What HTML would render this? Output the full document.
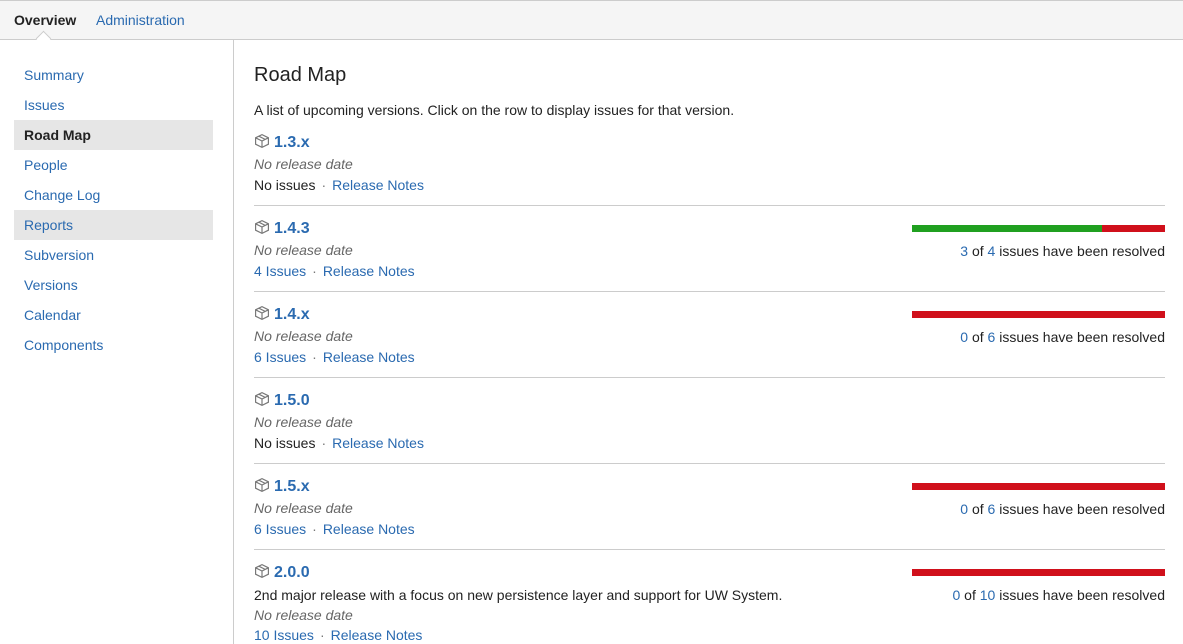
<!DOCTYPE html>
<html><head><style>
body{margin:0;width:1183px;height:644px;overflow:hidden;font-family:"Liberation Sans",Arial,sans-serif;font-size:14px;color:#222;background:#fff;position:relative}
a{color:#2a6ab0;text-decoration:none}
.top{position:absolute;left:0;top:0;width:1183px;height:40px;background:#f5f5f5;border-top:1px solid #ccc;border-bottom:1px solid #ccc;box-sizing:border-box}
.top span{position:absolute;top:11px;font-size:14px}
.ptr{position:absolute;left:38px;top:33px;width:10px;height:10px;background:#fff;border-left:1px solid #ccc;border-top:1px solid #ccc;transform:rotate(45deg)}
.side{position:absolute;left:233px;top:40px;width:1px;height:604px;background:#ccc}
.nav{position:absolute;left:14px;width:199px;height:30px;line-height:30px;padding-left:10px;box-sizing:border-box}
.sel{background:#e6e6e6}
h1{position:absolute;left:254px;top:64px;margin:0;font-size:20px;font-weight:normal;color:#222}
.t{position:absolute;left:254px;white-space:nowrap}
.ver{font-weight:bold;font-size:16px;color:#2a6ab0}
.i{color:#666;font-style:italic}
.hr{position:absolute;left:254px;width:911px;height:1px;background:#ccc}
.bar{position:absolute;left:912px;width:253px;height:7px;background:#d0101b}
.bar i{display:block;height:7px;background:#20a020}
.r{position:absolute;right:18px;white-space:nowrap}
.dot{color:#777;margin:0 6px}
svg{vertical-align:-2px;margin-right:4px}
</style></head><body>
<div class="top"><span style="left:14px;font-weight:bold;color:#222">Overview</span><span style="left:96px;color:#2a6ab0">Administration</span></div>
<div class="ptr"></div>
<div class="side"></div>
<div class="nav" style="top:60px"><a>Summary</a></div>
<div class="nav" style="top:90px"><a>Issues</a></div>
<div class="nav sel" style="top:120px;font-weight:bold">Road Map</div>
<div class="nav" style="top:150px"><a>People</a></div>
<div class="nav" style="top:180px"><a>Change Log</a></div>
<div class="nav sel" style="top:210px"><a>Reports</a></div>
<div class="nav" style="top:240px"><a>Subversion</a></div>
<div class="nav" style="top:270px"><a>Versions</a></div>
<div class="nav" style="top:300px"><a>Calendar</a></div>
<div class="nav" style="top:330px"><a>Components</a></div>
<h1>Road Map</h1>
<div class="t" style="top:102px">A list of upcoming versions. Click on the row to display issues for that version.</div>

<div class="t" style="top:133px"><svg width="16" height="16" viewBox="0 0 15 15" fill="none" stroke="#777" stroke-width="1.1"><path d="M7.5 1.5L13.5 4.5V10.5L7.5 13.5L1.5 10.5V4.5Z M1.5 4.5L7.5 7.5L13.5 4.5 M7.5 7.5V13.5 M4.5 3L10.5 6"/></svg><span class="ver">1.3.x</span></div>
<div class="t i" style="top:156px">No release date</div>
<div class="t" style="top:177px">No issues<span class="dot">·</span><a>Release Notes</a></div>
<div class="hr" style="top:205px"></div>

<div class="t" style="top:219px"><svg width="16" height="16" viewBox="0 0 15 15" fill="none" stroke="#777" stroke-width="1.1"><path d="M7.5 1.5L13.5 4.5V10.5L7.5 13.5L1.5 10.5V4.5Z M1.5 4.5L7.5 7.5L13.5 4.5 M7.5 7.5V13.5 M4.5 3L10.5 6"/></svg><span class="ver">1.4.3</span></div>
<div class="t i" style="top:242px">No release date</div>
<div class="t" style="top:263px"><a>4 Issues</a><span class="dot">·</span><a>Release Notes</a></div>
<div class="bar" style="top:225px"><i style="width:190px"></i></div>
<div class="r" style="top:243px"><a>3</a> of <a>4</a> issues have been resolved</div>
<div class="hr" style="top:291px"></div>

<div class="t" style="top:305px"><svg width="16" height="16" viewBox="0 0 15 15" fill="none" stroke="#777" stroke-width="1.1"><path d="M7.5 1.5L13.5 4.5V10.5L7.5 13.5L1.5 10.5V4.5Z M1.5 4.5L7.5 7.5L13.5 4.5 M7.5 7.5V13.5 M4.5 3L10.5 6"/></svg><span class="ver">1.4.x</span></div>
<div class="t i" style="top:328px">No release date</div>
<div class="t" style="top:349px"><a>6 Issues</a><span class="dot">·</span><a>Release Notes</a></div>
<div class="bar" style="top:311px"></div>
<div class="r" style="top:329px"><a>0</a> of <a>6</a> issues have been resolved</div>
<div class="hr" style="top:377px"></div>

<div class="t" style="top:391px"><svg width="16" height="16" viewBox="0 0 15 15" fill="none" stroke="#777" stroke-width="1.1"><path d="M7.5 1.5L13.5 4.5V10.5L7.5 13.5L1.5 10.5V4.5Z M1.5 4.5L7.5 7.5L13.5 4.5 M7.5 7.5V13.5 M4.5 3L10.5 6"/></svg><span class="ver">1.5.0</span></div>
<div class="t i" style="top:414px">No release date</div>
<div class="t" style="top:435px">No issues<span class="dot">·</span><a>Release Notes</a></div>
<div class="hr" style="top:463px"></div>

<div class="t" style="top:477px"><svg width="16" height="16" viewBox="0 0 15 15" fill="none" stroke="#777" stroke-width="1.1"><path d="M7.5 1.5L13.5 4.5V10.5L7.5 13.5L1.5 10.5V4.5Z M1.5 4.5L7.5 7.5L13.5 4.5 M7.5 7.5V13.5 M4.5 3L10.5 6"/></svg><span class="ver">1.5.x</span></div>
<div class="t i" style="top:500px">No release date</div>
<div class="t" style="top:521px"><a>6 Issues</a><span class="dot">·</span><a>Release Notes</a></div>
<div class="bar" style="top:483px"></div>
<div class="r" style="top:501px"><a>0</a> of <a>6</a> issues have been resolved</div>
<div class="hr" style="top:549px"></div>

<div class="t" style="top:563px"><svg width="16" height="16" viewBox="0 0 15 15" fill="none" stroke="#777" stroke-width="1.1"><path d="M7.5 1.5L13.5 4.5V10.5L7.5 13.5L1.5 10.5V4.5Z M1.5 4.5L7.5 7.5L13.5 4.5 M7.5 7.5V13.5 M4.5 3L10.5 6"/></svg><span class="ver">2.0.0</span></div>
<div class="t" style="top:587px">2nd major release with a focus on new persistence layer and support for UW System.</div>
<div class="t i" style="top:607px">No release date</div>
<div class="t" style="top:627px"><a>10 Issues</a><span class="dot">·</span><a>Release Notes</a></div>
<div class="bar" style="top:569px"></div>
<div class="r" style="top:587px"><a>0</a> of <a>10</a> issues have been resolved</div>
</body></html>
